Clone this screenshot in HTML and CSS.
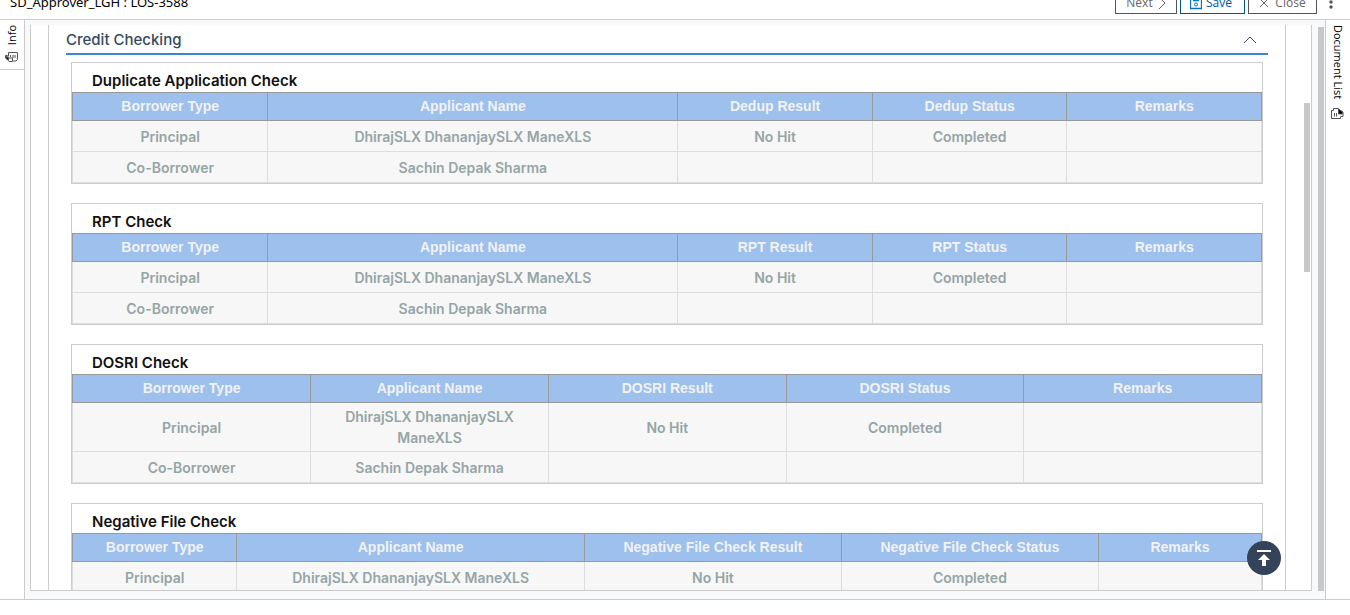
FILE: index.html
```html
<!DOCTYPE html>
<html lang="en">
<head>
<meta charset="utf-8">
<title>Credit Checking</title>
<link rel="stylesheet" href="styles.css">
</head>
<body>
<header class="topbar">
  <div class="case-name">SD_Approver_LGH : LOS-3588</div>
  <div class="actions">
    <button class="btn btn-next">Next <svg width="8" height="14" viewBox="0 0 8 14"><path d="M1 1l6 6-6 6"/></svg></button>
    <button class="btn btn-save"><svg width="12" height="14" viewBox="0 0 12 14"><path d="M.5 1.500h11v11H.5zM3 4.500h6" stroke-width="1.300"/><circle cx="6" cy="8.500" r="1.500"/></svg> Save</button>
    <button class="btn btn-close"><svg width="10" height="10" viewBox="0 0 10 10"><path d="M1 1l8 8M9 1L1 9"/></svg> Close</button>
    <button class="more" aria-label="More"><svg width="4" height="14" viewBox="0 0 4 14"><circle cx="2" cy="2" r="1.700"/><circle cx="2" cy="7" r="1.700"/><circle cx="2" cy="12" r="1.700"/></svg></button>
  </div>
</header>
<div class="workspace">
  <aside class="rail rail-left">
    <button class="rail-tab rail-info"><span class="up">Info</span>
      <svg width="13" height="11" viewBox="0 0 13 11"><path d="M3.500 4V.5h9v7l-1.500 1.500H8M.5 3.500h2l1 2.500h4v3.500H4L2.500 7.500.5 6zM5.500 3v2M8 3v3M10 3v3"/><path d="M.5 4l3 2v2l-2-1z" fill="currentColor"/></svg>
    </button>
  </aside>
  <main class="stage">
    <div class="frame">
      <div class="sheet">
        <h2 class="section-title"><button class="section-toggle">Credit Checking <svg width="14" height="8" viewBox="0 0 14 8"><path d="M1 7l6-6 6 6"/></svg></button></h2>
        <div class="cards">
          <section class="card">
            <h3>Duplicate Application Check</h3>
            <table class="grid">
              <colgroup><col class="first"><col class="wide"><col class="narrow"><col class="narrow"><col class="narrow"></colgroup>
              <thead><tr><th>Borrower Type</th><th>Applicant Name</th><th>Dedup Result</th><th>Dedup Status</th><th>Remarks</th></tr></thead>
              <tbody>
                <tr><td>Principal</td><td>DhirajSLX DhananjaySLX ManeXLS</td><td>No Hit</td><td>Completed</td><td></td></tr>
                <tr><td>Co-Borrower</td><td>Sachin Depak Sharma</td><td></td><td></td><td></td></tr>
              </tbody>
            </table>
          </section>
          <section class="card">
            <h3>RPT Check</h3>
            <table class="grid">
              <colgroup><col class="first"><col class="wide"><col class="narrow"><col class="narrow"><col class="narrow"></colgroup>
              <thead><tr><th>Borrower Type</th><th>Applicant Name</th><th>RPT Result</th><th>RPT Status</th><th>Remarks</th></tr></thead>
              <tbody>
                <tr><td>Principal</td><td>DhirajSLX DhananjaySLX ManeXLS</td><td>No Hit</td><td>Completed</td><td></td></tr>
                <tr><td>Co-Borrower</td><td>Sachin Depak Sharma</td><td></td><td></td><td></td></tr>
              </tbody>
            </table>
          </section>
          <section class="card">
            <h3>DOSRI Check</h3>
            <table class="grid">
              <colgroup><col class="even-first"><col><col><col><col></colgroup>
              <thead><tr><th>Borrower Type</th><th>Applicant Name</th><th>DOSRI Result</th><th>DOSRI Status</th><th>Remarks</th></tr></thead>
              <tbody>
                <tr><td>Principal</td><td>DhirajSLX DhananjaySLX ManeXLS</td><td>No Hit</td><td>Completed</td><td></td></tr>
                <tr><td>Co-Borrower</td><td>Sachin Depak Sharma</td><td></td><td></td><td></td></tr>
              </tbody>
            </table>
          </section>
          <section class="card">
            <h3>Negative File Check</h3>
            <table class="grid">
              <colgroup><col class="neg-first"><col class="neg-name"><col class="neg-mid"><col class="neg-mid"><col></colgroup>
              <thead><tr><th>Borrower Type</th><th>Applicant Name</th><th>Negative File Check Result</th><th>Negative File Check Status</th><th>Remarks</th></tr></thead>
              <tbody>
                <tr><td>Principal</td><td>DhirajSLX DhananjaySLX ManeXLS</td><td>No Hit</td><td>Completed</td><td></td></tr>
              </tbody>
            </table>
          </section>
        </div>
      </div>
      <div class="scroll-inner"></div>
    </div>
    <div class="scroll-outer"></div>
    <button class="to-top" aria-label="Back to top"><svg width="34" height="34" viewBox="0 0 34 34"><path d="M10 9h14v2H10zM17 13l6 6h-4v6h-4v-6h-4z"/></svg></button>
  </main>
  <aside class="rail rail-right">
    <button class="rail-tab"><span class="down">Document List</span>
      <svg width="13" height="11" viewBox="0 0 13 11"><path d="M9.500 9v1.500H.5v-8h2M2.500 2.500v-2h5l1 1.500 3.500 2v4.500H9.500M3.500 5v3.500M5.500 5v3.500"/><path d="M7.500 1l4 3v2h-4z" fill="currentColor"/></svg>
    </button>
  </aside>
</div>
</body>
</html>
```

FILE: styles.css
```css
* { box-sizing: border-box; }
body {
  margin: 0;
  height: 100vh;
  padding-bottom: 15px;
  display: flex;
  flex-direction: column;
  overflow: hidden;
  background: #fff;
  font-family: Inter, "Liberation Sans", sans-serif;
}
button {
  border: 0;
  padding: 0;
  background: none;
  font: inherit;
  color: inherit;
}
svg { fill: none; stroke: currentColor; flex: none; }

.topbar {
  flex: none;
  height: 20px;
  display: flex;
  justify-content: space-between;
  align-items: flex-end;
  padding: 0 17px 5px 10px;
  overflow: hidden;
  border-bottom: 1px solid #ccc;
  font-family: "Open Sans", sans-serif;
}
.case-name {
  font-family: "Noto Sans", sans-serif;
  font-size: 13px;
  line-height: 24px;
  color: #000;
}
.actions { display: flex; align-items: center; }
.btn {
  height: 24px;
  display: flex;
  align-items: center;
  justify-content: center;
  gap: 5px;
  margin-right: 3px;
  padding-top: 2px;
  background: #fff;
  border: 1px solid #555;
  color: #666;
  font-size: 12px;
  line-height: 20px;
}
.btn-next { width: 62px; }
.btn-save { width: 65px; gap: 4px; padding-right: 3px; border-color: #00569d; color: #00569d; }
.btn-save svg { stroke: #0075c9; }
.btn-close { width: 69px; gap: 6px; margin-right: 12px; }
.more { color: #555; display: flex; }
.more svg { fill: currentColor; stroke: none; }

.workspace {
  flex: 1;
  min-height: 0;
  display: flex;
  border-bottom: 1px solid #ccc;
}
.rail { width: 25px; flex: none; font-family: "Open Sans", sans-serif; font-size: 11px; color: #000; }
.rail-left { border-right: 1px solid #ccc; }
.rail-right { border-left: 1px solid #ccc; }
.rail-tab {
  width: 100%;
  display: flex;
  flex-direction: column;
  align-items: center;
  gap: 9px;
  padding: 5px 1px 6px 0;
}
.rail-tab svg { stroke: #555; }
.rail-info { border-bottom: 1px solid #ccc; gap: 7px; }
.up, .down { writing-mode: vertical-rl; line-height: 16px; }
.up { transform: rotate(180deg); }

.stage {
  flex: 1;
  min-width: 0;
  display: flex;
  gap: 6px;
  padding: 5px 1px 8px 5px;
  position: relative;
  background: #f8f9fb;
}
.frame {
  flex: 1;
  min-width: 0;
  display: flex;
  overflow: hidden;
  background: #fff;
  border: 1px solid #ccc;
  border-top: 0;
  padding-left: 17px;
}
.sheet {
  flex: 1;
  min-width: 0;
  border: 1px solid #ccc;
  border-width: 0 1px;
  padding: 0 17px;
}
.scroll-inner {
  width: 6px;
  height: 169px;
  margin: 78px 1px 0 18px;
  background: #c8c8c8;
}
.scroll-outer { width: 6px; margin-top: 2px; background: #c8c8c8; }

.section-title { margin: 0; border-bottom: 2px solid #3a85d6; }
.section-toggle {
  width: 100%;
  height: 28px;
  display: flex;
  align-items: center;
  justify-content: space-between;
  padding: 1px 11px 0 0;
  font-size: 15px;
  font-weight: 500;
  color: #34495e;
}
.cards {
  display: flex;
  flex-direction: column;
  gap: 19px;
  padding: 7px 5px 0;
}
.card { border: 1px solid #ccc; }
.card h3 {
  margin: 0;
  padding: 8px 20px 1px;
  font-size: 15px;
  line-height: 20px;
  font-weight: 600;
  color: #111;
}
.grid {
  width: 100%;
  table-layout: fixed;
  border-collapse: separate;
  border-spacing: 0;
  text-align: center;
  font-size: 14px;
}
.first { width: 16.5%; }
.narrow { width: 16.35%; }
.wide { width: 34.45%; }
.even-first { width: 20.1%; }
.neg-first { width: 13.9%; }
.neg-name { width: 29.2%; }
.neg-mid { width: 21.6%; }
.grid th {
  padding: 3px 8px;
  line-height: 21px;
  font-family: "Liberation Sans", Arial, sans-serif;
  font-weight: 700;
  color: #f2f2f2;
  background: #9dc0ed;
  border: 1px solid #999;
  border-left-width: 0;
}
.grid td {
  height: 31px;
  padding: 3px 20px;
  line-height: 21px;
  font-weight: 600;
  color: #95a5a6;
  background: #f7f7f7;
  border: 1px solid #ddd;
  border-width: 0 1px 1px 0;
}
.grid th:first-child, .grid td:first-child { border-left-width: 1px; }

.to-top {
  position: absolute;
  right: 44px;
  bottom: 24px;
  width: 34px;
  height: 34px;
  border-radius: 50%;
  background: #34435a;
  color: #fff;
}
.to-top svg { display: block; fill: currentColor; stroke: none; }
```
